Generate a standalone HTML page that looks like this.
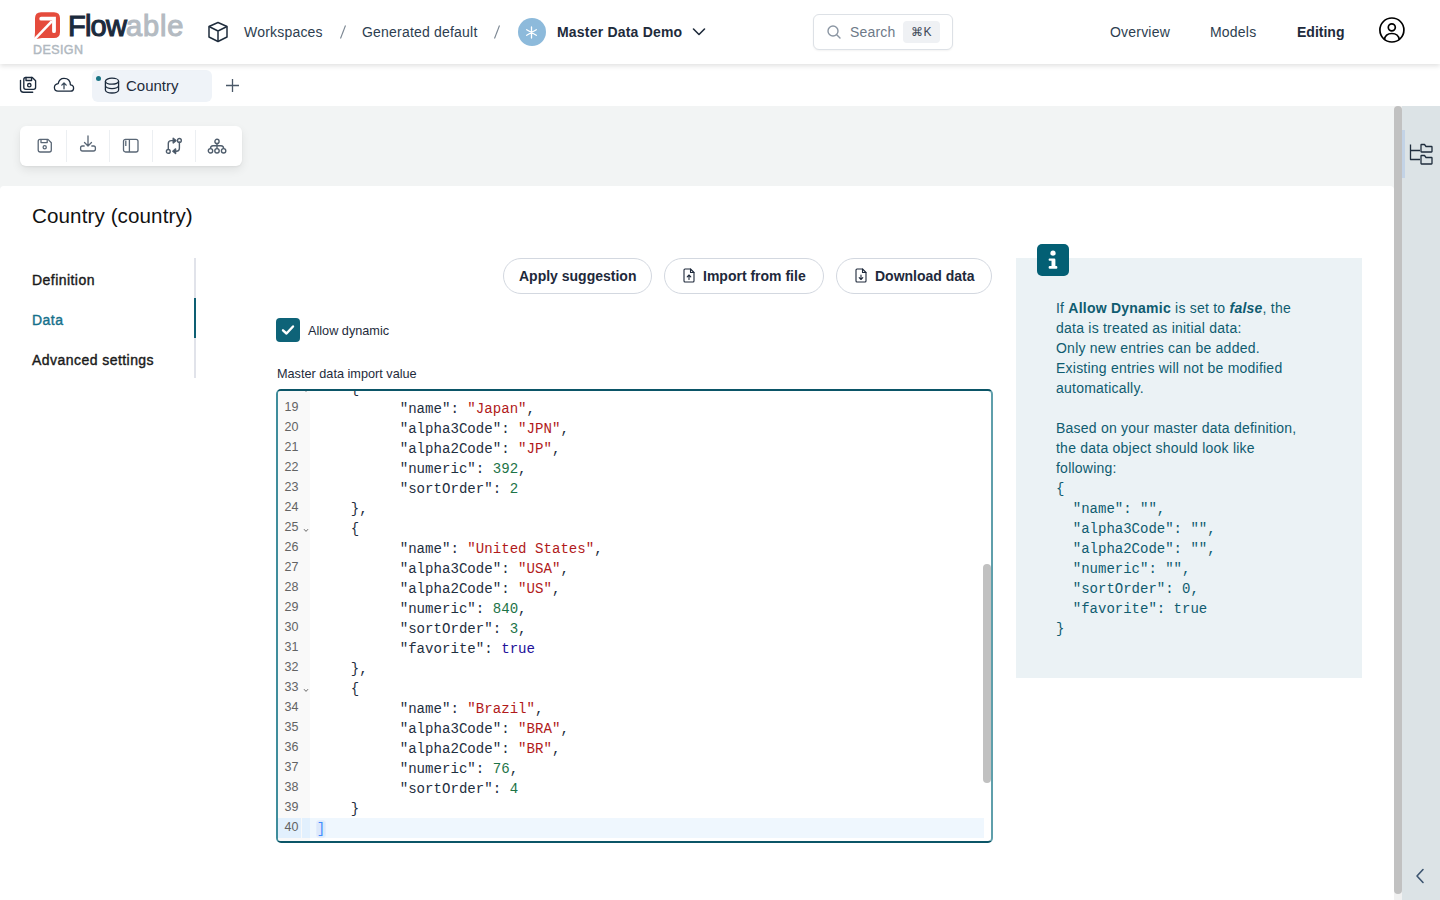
<!DOCTYPE html>
<html><head><meta charset="utf-8">
<style>
*{box-sizing:border-box;margin:0;padding:0}
html,body{width:1440px;height:900px;overflow:hidden;background:#fff;font-family:"Liberation Sans",sans-serif;color:#1e293b}
.abs{position:absolute}
#hdr{position:absolute;left:0;top:0;width:1440px;height:64px;background:#fff;box-shadow:0 2px 5px rgba(0,0,0,.12);z-index:5}
.ht{position:absolute;top:23px;font-size:14px;letter-spacing:0.2px;color:#2d3e50;white-space:nowrap;line-height:18px}
#tabs{position:absolute;left:0;top:64px;width:1440px;height:42px;background:#fff}
#gray{position:absolute;left:0;top:106px;width:1394px;height:100px;background:#f2f4f4}
#content{position:absolute;left:0;top:186px;width:1394px;height:714px;background:#fff;border-top-left-radius:4px;border-top-right-radius:4px}
#rpanel{position:absolute;left:1402px;top:106px;width:38px;height:794px;background:#dce3e6}
#sbar{position:absolute;left:1394px;top:106px;width:8px;height:794px;background:#f1f1f1}
#sthumb{position:absolute;left:1394px;top:106px;width:8px;height:788px;background:#c1c1c1;border-radius:4px}
.nav{position:absolute;left:32px;font-size:14px;letter-spacing:0.45px;-webkit-text-stroke:0.4px currentColor;color:#1a1a1a;line-height:18px}
.btn{position:absolute;top:258px;height:36px;border:1px solid #d3d8e0;border-radius:18px;background:#fff;font-size:14px;font-weight:bold;color:#1e293b;line-height:34px;white-space:nowrap}
#editor{position:absolute;left:276px;top:389px;width:717px;height:454px;border:2px solid #0b5567;border-left-color:#3f8d9c;border-right-color:#5f9fab;border-radius:5px;overflow:hidden;background:#fff}
.ln{position:absolute;left:0;width:20.5px;font-family:"Liberation Sans",sans-serif;font-size:12.5px;color:#636363;text-align:right;line-height:20px}
.cl{position:absolute;font-family:"Liberation Mono",monospace;font-size:14.1px;color:#1f2f3f;white-space:pre;line-height:20px}
.s{color:#b11a1a}
.n{color:#1d7447}
.k{color:#221199}
#info{position:absolute;left:1016px;top:258px;width:346px;height:420px;background:#ebf2f5}
.it{position:absolute;left:1056px;font-size:14px;letter-spacing:0.23px;color:#0f5c70;white-space:pre;line-height:20px}
.im{font-family:"Liberation Mono",monospace;font-size:14px;letter-spacing:0}
</style></head>
<body>
<div id="hdr">
  <!-- logo -->
  <svg class="abs" style="left:34px;top:12px" width="27" height="28" viewBox="0 0 27 28">
    <path d="M7 0.2H20Q26 0.2 26 6.2V20Q26 26 20 26H8L0.5 27.2L1 20V6.2Q1 0.2 7 0.2Z" fill="#e54b3c"/>
    <path d="M7.2 6.7H20V19.2" stroke="#fff" stroke-width="3.8" fill="none" stroke-linecap="round" stroke-linejoin="miter"/>
    <path d="M0.3 27.5L18 9.2" stroke="#fff" stroke-width="2.6" fill="none"/>
  </svg>
  <div class="abs" style="left:68px;top:9px;font-size:29px;font-weight:normal;-webkit-text-stroke:1.1px currentColor;letter-spacing:0px;line-height:34px;white-space:nowrap"><span style="color:#1b2a3c;letter-spacing:-0.8px">Flow</span><span style="color:#b4bbc2;letter-spacing:0.8px">able</span></div>
  <div class="abs" style="left:33px;top:45px;font-size:12.5px;-webkit-text-stroke:0.45px currentColor;letter-spacing:0.4px;color:#b0b8c0;line-height:11px">DESIGN</div>
  <!-- cube -->
  <svg class="abs" style="left:207px;top:21px" width="22" height="22" viewBox="0 0 22 22" fill="none" stroke="#1f2d3d" stroke-width="1.5" stroke-linejoin="round">
    <path d="M11 1.5L20 5.5V16L11 20.5L2 16V5.5Z"/><path d="M2 5.5L11 10L20 5.5M11 10V20.5"/>
  </svg>
  <div class="ht" style="left:244px">Workspaces</div>
  <svg class="abs" style="left:338px;top:24px" width="10" height="16"><path d="M7.5 1.5L2.5 14.5" stroke="#7a8591" stroke-width="1.1"/></svg>
  <div class="ht" style="left:362px">Generated default</div>
  <svg class="abs" style="left:492px;top:24px" width="10" height="16"><path d="M7.5 1.5L2.5 14.5" stroke="#7a8591" stroke-width="1.1"/></svg>
  <div class="abs" style="left:517.5px;top:18px;width:28px;height:28px;border-radius:50%;background:#8dbadb"></div>
  <svg class="abs" style="left:524px;top:24.5px" width="15" height="15" viewBox="0 0 15 15" stroke="#fff" stroke-width="1.3" stroke-linecap="round">
    <path d="M7.5 2V13M2.7 4.7L12.3 10.3M12.3 4.7L2.7 10.3"/>
  </svg>
  <div class="ht" style="left:557px;font-weight:bold;color:#1e2b3b">Master Data Demo</div>
  <svg class="abs" style="left:692px;top:27px" width="14" height="10" viewBox="0 0 14 10" fill="none" stroke="#1e2b3b" stroke-width="1.6" stroke-linecap="round" stroke-linejoin="round"><path d="M1.5 2L7 7.5L12.5 2"/></svg>
  <!-- search -->
  <div class="abs" style="left:813px;top:14px;width:140px;height:36px;border:1px solid #dde1e6;border-radius:6px;background:#fff;box-shadow:0 1px 2px rgba(0,0,0,.05)"></div>
  <svg class="abs" style="left:826px;top:24px" width="16" height="16" viewBox="0 0 16 16" fill="none" stroke="#8b96a3" stroke-width="1.4" stroke-linecap="round"><circle cx="7" cy="7" r="5"/><path d="M10.7 10.7L14 14"/></svg>
  <div class="ht" style="left:850px;color:#6e7a88">Search</div>
  <div class="abs" style="left:903px;top:21px;width:37px;height:22px;border-radius:4px;background:#eff1f4;font-size:12px;color:#3b4756;text-align:center;line-height:22px">&#8984;K</div>
  <!-- nav -->
  <div class="ht" style="left:1110px">Overview</div>
  <div class="ht" style="left:1210px">Models</div>
  <div class="ht" style="left:1297px;font-weight:bold;color:#1e2b3b;letter-spacing:0">Editing</div>
  <svg class="abs" style="left:1378px;top:16px" width="28" height="28" viewBox="0 0 28 28" fill="none" stroke="#000" stroke-width="1.7">
    <circle cx="13.9" cy="14" r="12"/><circle cx="13.8" cy="11.3" r="3.5"/><path d="M6.4 23.8C7 19 9.6 17.5 13.8 17.5C18 17.5 20.6 19 21.3 23.6"/>
  </svg>
</div>
<div id="tabs">
  <svg class="abs" style="left:19px;top:12px" width="19" height="19" viewBox="0 0 19 19" fill="none" stroke="#1b2a3c" stroke-width="1.35" stroke-linejoin="round" stroke-linecap="round">
    <path d="M6.8 1.5H13.3L16.6 4.8V11.3Q16.6 13.3 14.6 13.3H6.8Q4.8 13.3 4.8 11.3V3.5Q4.8 1.5 6.8 1.5Z"/><path d="M7 1.5V4.5H12.6V1.5"/><circle cx="10.3" cy="9.2" r="1.7"/><path d="M1.5 4.3V13.2Q1.5 16.2 4.5 16.2H13.7"/>
  </svg>
  <svg class="abs" style="left:53px;top:12px" width="22" height="18" viewBox="0 0 22 18" fill="none" stroke="#1b2a3c" stroke-width="1.3" stroke-linecap="round" stroke-linejoin="round">
    <path d="M5 15.2H17.5Q20.6 15.2 20.6 12.2Q20.6 9 17.4 8.8Q17.2 2.3 11 2.3Q6.2 2.3 5.2 7.6Q1.4 8.2 1.4 11.6Q1.4 15.2 5 15.2Z"/><path d="M11 12.8V7M8.8 9.1L11 6.9L13.2 9.1" stroke="#3a4a5a"/>
  </svg>
  <div class="abs" style="left:92px;top:6px;width:120px;height:32px;border-radius:6px;background:#eff3f8"></div>
  <div class="abs" style="left:96px;top:12px;width:5px;height:5px;border-radius:50%;background:#1a7585"></div>
  <svg class="abs" style="left:104px;top:13px" width="16" height="18" viewBox="0 0 16 18" fill="none" stroke="#1b2a3c" stroke-width="1.3">
    <ellipse cx="8" cy="4.2" rx="6.6" ry="3"/><path d="M1.4 4.2V13A6.6 3 0 0 0 14.6 13V4.2M1.4 8.6A6.6 3 0 0 0 14.6 8.6"/>
  </svg>
  <div class="abs" style="left:126px;top:13px;font-size:15px;color:#1e2b3b;line-height:18px">Country</div>
  <svg class="abs" style="left:225px;top:14px" width="15" height="15" viewBox="0 0 15 15" stroke="#4a5868" stroke-width="1.3"><path d="M7.5 1V14M1 7.5H14"/></svg>
</div>
<div id="gray">
  <div class="abs" style="left:20px;top:20px;width:222px;height:40px;background:#fff;border-radius:6px;box-shadow:0 4px 10px rgba(0,0,0,.08),0 1px 2px rgba(0,0,0,.05)">
    <div class="abs" style="left:46px;top:4px;width:1px;height:32px;background:#eceff2"></div>
    <div class="abs" style="left:89px;top:4px;width:1px;height:32px;background:#eceff2"></div>
    <div class="abs" style="left:132px;top:4px;width:1px;height:32px;background:#eceff2"></div>
    <div class="abs" style="left:175px;top:4px;width:1px;height:32px;background:#eceff2"></div>
    <svg class="abs" style="left:16px;top:12px" width="17" height="17" viewBox="0 0 17 17" fill="none" stroke="#5a6776" stroke-width="1.3" stroke-linejoin="round">
      <path d="M4 1.4H12L15.3 4.7V12Q15.3 14 13.3 14H4.2Q2.2 14 2.2 12V3.4Q2.2 1.4 4 1.4Z"/><path d="M5 1.4V4.6H11.2V1.4"/><circle cx="8.7" cy="9.3" r="1.6"/>
    </svg>
    <svg class="abs" style="left:59px;top:9px" width="18" height="18" viewBox="0 0 18 18" fill="none" stroke="#5a6776" stroke-width="1.3" stroke-linecap="round" stroke-linejoin="round">
      <path d="M9 1V11M5.5 7.5L9 11L12.5 7.5"/><path d="M5.2 11H3.3Q1.6 11 1.6 13V14Q1.6 16 3.5 16H14.5Q16.4 16 16.4 14V13Q16.4 11 14.7 11H12.8"/>
    </svg>
    <svg class="abs" style="left:102px;top:12px" width="17" height="16" viewBox="0 0 17 16" fill="none" stroke="#5a6776" stroke-width="1.3" stroke-linejoin="round">
      <rect x="1.5" y="1.3" width="14.5" height="12.7" rx="2"/><path d="M7.4 1.3V14M3.8 2.5V8"/>
    </svg>
    <svg class="abs" style="left:145px;top:11px" width="18" height="18" viewBox="0 0 18 18" fill="none" stroke="#4f5d6c" stroke-width="1.4" stroke-linecap="round" stroke-linejoin="round">
      <circle cx="3.3" cy="14.4" r="1.9"/><circle cx="14.4" cy="3.4" r="1.9"/><path d="M3.3 12.4V6.6Q3.3 3.6 6.3 3.6H8.6M14.4 5.3V11.3Q14.4 14.2 11.4 14.2H9.6"/>
      <path d="M8.2 1.3L11 3.6L8.2 5.9Z" fill="#3a4858"/><path d="M10.6 11.9L7.8 14.2L10.6 16.5Z" fill="#3a4858"/>
    </svg>
    <svg class="abs" style="left:187px;top:12px" width="20" height="17" viewBox="0 0 20 17" fill="none" stroke="#4f5d6c" stroke-width="1.4" stroke-linejoin="round">
      <circle cx="10" cy="3.4" r="2.1"/><circle cx="3.5" cy="12.8" r="2.2"/><circle cx="10" cy="12.8" r="2.2"/><circle cx="16.6" cy="12.8" r="2.2"/><path d="M10 5.5V10.6M3.5 10.6Q3.5 7.8 6 7.8H14Q16.6 7.8 16.6 10.6"/>
    </svg>
  </div>
</div>
<div id="content">
  <div class="abs" style="left:32px;top:18px;font-size:20.6px;letter-spacing:0.1px;color:#111;line-height:23px;white-space:nowrap">Country (country)</div>
</div>
<div class="nav" style="top:271px;color:#1a1a1a">Definition</div>
<div class="nav" style="top:311px;color:#16708a">Data</div>
<div class="nav" style="top:351px;color:#1a1a1a">Advanced settings</div>
<div class="abs" style="left:194px;top:258px;width:2px;height:120px;background:#e1e3ea"></div>
<div class="abs" style="left:193.5px;top:298px;width:2.5px;height:40px;background:#0e5f73"></div>

<div class="btn" style="left:503px;width:149px;padding-left:15px">Apply suggestion</div>
<div class="btn" style="left:664px;width:160px;padding-left:38px">Import from file</div>
<svg class="abs" style="left:683px;top:268px" width="12" height="15" viewBox="0 0 12 15" fill="none" stroke="#1e293b" stroke-width="1.1" stroke-linejoin="round" stroke-linecap="round">
  <path d="M1 2Q1 1 2 1H7.5L11 4.5V13Q11 14 10 14H2Q1 14 1 13Z"/><path d="M7.5 1V4.5H11M6 11.5V7M4.2 8.8L6 7L7.8 8.8"/>
</svg>
<div class="btn" style="left:836px;width:156px;padding-left:38px">Download data</div>
<svg class="abs" style="left:855px;top:268px" width="12" height="15" viewBox="0 0 12 15" fill="none" stroke="#1e293b" stroke-width="1.1" stroke-linejoin="round" stroke-linecap="round">
  <path d="M1 2Q1 1 2 1H7.5L11 4.5V13Q11 14 10 14H2Q1 14 1 13Z"/><path d="M7.5 1V4.5H11M6 7V11.5M4.2 9.7L6 11.5L7.8 9.7"/>
</svg>

<div class="abs" style="left:276px;top:318px;width:24px;height:24px;border-radius:4px;background:#0e6378"></div>
<svg class="abs" style="left:280px;top:322px" width="16" height="16" viewBox="0 0 16 16" fill="none" stroke="#fff" stroke-width="2.4" stroke-linecap="round" stroke-linejoin="round"><path d="M3 8.3L6.5 11.5L13 4.5"/></svg>
<div class="abs" style="left:308px;top:324px;font-size:12.7px;color:#1e2b3b;line-height:15px">Allow dynamic</div>
<div class="abs" style="left:277px;top:367px;font-size:12.7px;color:#1e2b3b;line-height:15px">Master data import value</div>

<div id="editor">
<div class="abs" style="left:0;top:0;width:32px;height:100%;background:#f9f9f9"></div>
<div class="abs" style="left:32px;top:427px;width:674px;height:20px;background:#eff7fe"></div>
<div class="abs" style="left:0;top:427px;width:23px;height:20px;background:#e2f0fd"></div><div class="abs" style="left:24px;top:427px;width:8px;height:20px;background:#e2f0fd"></div>
<svg class="abs" style="left:25px;top:-3px" width="6" height="5" viewBox="0 0 6 5"><path d="M1 1.2L3 3.4L5 1.2" fill="none" stroke="#666" stroke-width="1"/></svg>
<div class="cl" style="left:72.7px;top:-12px">{</div>
<div class="ln" style="top:6px">19</div>
<div class="cl" style="left:121.7px;top:8px">&quot;name&quot;: <span class="s">&quot;Japan&quot;</span>,</div>
<div class="ln" style="top:26px">20</div>
<div class="cl" style="left:121.7px;top:28px">&quot;alpha3Code&quot;: <span class="s">&quot;JPN&quot;</span>,</div>
<div class="ln" style="top:46px">21</div>
<div class="cl" style="left:121.7px;top:48px">&quot;alpha2Code&quot;: <span class="s">&quot;JP&quot;</span>,</div>
<div class="ln" style="top:66px">22</div>
<div class="cl" style="left:121.7px;top:68px">&quot;numeric&quot;: <span class="n">392</span>,</div>
<div class="ln" style="top:86px">23</div>
<div class="cl" style="left:121.7px;top:88px">&quot;sortOrder&quot;: <span class="n">2</span></div>
<div class="ln" style="top:106px">24</div>
<div class="cl" style="left:72.7px;top:108px">},</div>
<div class="ln" style="top:126px">25</div>
<div class="cl" style="left:72.7px;top:128px">{</div>
<div class="ln" style="top:146px">26</div>
<div class="cl" style="left:121.7px;top:148px">&quot;name&quot;: <span class="s">&quot;United States&quot;</span>,</div>
<div class="ln" style="top:166px">27</div>
<div class="cl" style="left:121.7px;top:168px">&quot;alpha3Code&quot;: <span class="s">&quot;USA&quot;</span>,</div>
<div class="ln" style="top:186px">28</div>
<div class="cl" style="left:121.7px;top:188px">&quot;alpha2Code&quot;: <span class="s">&quot;US&quot;</span>,</div>
<div class="ln" style="top:206px">29</div>
<div class="cl" style="left:121.7px;top:208px">&quot;numeric&quot;: <span class="n">840</span>,</div>
<div class="ln" style="top:226px">30</div>
<div class="cl" style="left:121.7px;top:228px">&quot;sortOrder&quot;: <span class="n">3</span>,</div>
<div class="ln" style="top:246px">31</div>
<div class="cl" style="left:121.7px;top:248px">&quot;favorite&quot;: <span class="k">true</span></div>
<div class="ln" style="top:266px">32</div>
<div class="cl" style="left:72.7px;top:268px">},</div>
<div class="ln" style="top:286px">33</div>
<div class="cl" style="left:72.7px;top:288px">{</div>
<div class="ln" style="top:306px">34</div>
<div class="cl" style="left:121.7px;top:308px">&quot;name&quot;: <span class="s">&quot;Brazil&quot;</span>,</div>
<div class="ln" style="top:326px">35</div>
<div class="cl" style="left:121.7px;top:328px">&quot;alpha3Code&quot;: <span class="s">&quot;BRA&quot;</span>,</div>
<div class="ln" style="top:346px">36</div>
<div class="cl" style="left:121.7px;top:348px">&quot;alpha2Code&quot;: <span class="s">&quot;BR&quot;</span>,</div>
<div class="ln" style="top:366px">37</div>
<div class="cl" style="left:121.7px;top:368px">&quot;numeric&quot;: <span class="n">76</span>,</div>
<div class="ln" style="top:386px">38</div>
<div class="cl" style="left:121.7px;top:388px">&quot;sortOrder&quot;: <span class="n">4</span></div>
<div class="ln" style="top:406px">39</div>
<div class="cl" style="left:72.7px;top:408px">}</div>
<div class="ln" style="top:426px">40</div>
<div class="cl" style="left:38.7px;top:428px"><span style="color:#3f8cff;background:#dde9fb;border-radius:3px;box-shadow:0 0 0 1px #e3edfc">]</span></div>
<svg class="abs" style="left:25px;top:137px" width="6" height="5" viewBox="0 0 6 5"><path d="M1 1.2L3 3.4L5 1.2" fill="none" stroke="#666" stroke-width="1"/></svg><svg class="abs" style="left:25px;top:297px" width="6" height="5" viewBox="0 0 6 5"><path d="M1 1.2L3 3.4L5 1.2" fill="none" stroke="#666" stroke-width="1"/></svg>
<div class="abs" style="left:705px;top:173px;width:8px;height:219px;border-radius:4px;background:#c1c1c1"></div>
</div>
<div id="info"></div>
<div class="abs" style="left:1037px;top:244px;width:32px;height:32px;border-radius:5px;background:#035f74"></div>
<svg class="abs" style="left:1037px;top:244px" width="32" height="32" viewBox="0 0 32 32" fill="#fff"><circle cx="16" cy="9.2" r="2.6"/><path d="M12.6 14.5H17.2Q18.4 14.5 18.4 15.7V22.1H19.2Q20.4 22.1 20.4 23.45Q20.4 24.8 19.2 24.8H12.8Q11.6 24.8 11.6 23.45Q11.6 22.1 12.8 22.1H14.5V16.8H12.6Q11.6 16.8 11.6 15.65Q11.6 14.5 12.6 14.5Z"/></svg>
<div class="it" style="top:298px">If <b>Allow Dynamic</b> is set to <b><i>false</i></b>, the</div>
<div class="it" style="top:318px">data is treated as initial data:</div>
<div class="it" style="top:338px">Only new entries can be added.</div>
<div class="it" style="top:358px">Existing entries will not be modified</div>
<div class="it" style="top:378px">automatically.</div>
<div class="it" style="top:418px">Based on your master data definition,</div>
<div class="it" style="top:438px">the data object should look like</div>
<div class="it" style="top:458px">following:</div>
<div class="it im" style="top:479px">{</div>
<div class="it im" style="top:499px">  "name": "",</div>
<div class="it im" style="top:519px">  "alpha3Code": "",</div>
<div class="it im" style="top:539px">  "alpha2Code": "",</div>
<div class="it im" style="top:559px">  "numeric": "",</div>
<div class="it im" style="top:579px">  "sortOrder": 0,</div>
<div class="it im" style="top:599px">  "favorite": true</div>
<div class="it im" style="top:619px">}</div>
<div id="sbar"></div>
<div id="sthumb"></div>
<div id="rpanel">
  <div class="abs" style="left:0;top:24px;width:3px;height:48px;background:#c3d3e6"></div>
  <svg class="abs" style="left:7px;top:37px" width="25" height="23" viewBox="0 0 25 23" fill="none" stroke="#1f2d3d" stroke-width="1.3" stroke-linejoin="round">
    <path d="M1.5 1.5V16.5H11M1.5 7.5H11"/>
    <path d="M12 3V8.5Q12 9 12.5 9H22.5Q23 9 23 8.5V4Q23 3.5 22.5 3.5H17L15.5 1.5H12.5Q12 1.5 12 2Z"/>
    <path d="M12 13.5V20.5Q12 21 12.5 21H22.5Q23 21 23 20.5V15Q23 14.5 22.5 14.5H17L15.5 12.5H12.5Q12 12.5 12 13Z"/>
  </svg>
  <svg class="abs" style="left:13px;top:762px" width="10" height="16" viewBox="0 0 10 16" fill="none" stroke="#3d5570" stroke-width="1.6" stroke-linecap="round" stroke-linejoin="round"><path d="M8 1.5L2 8L8 14.5"/></svg>
</div>
</body></html>
